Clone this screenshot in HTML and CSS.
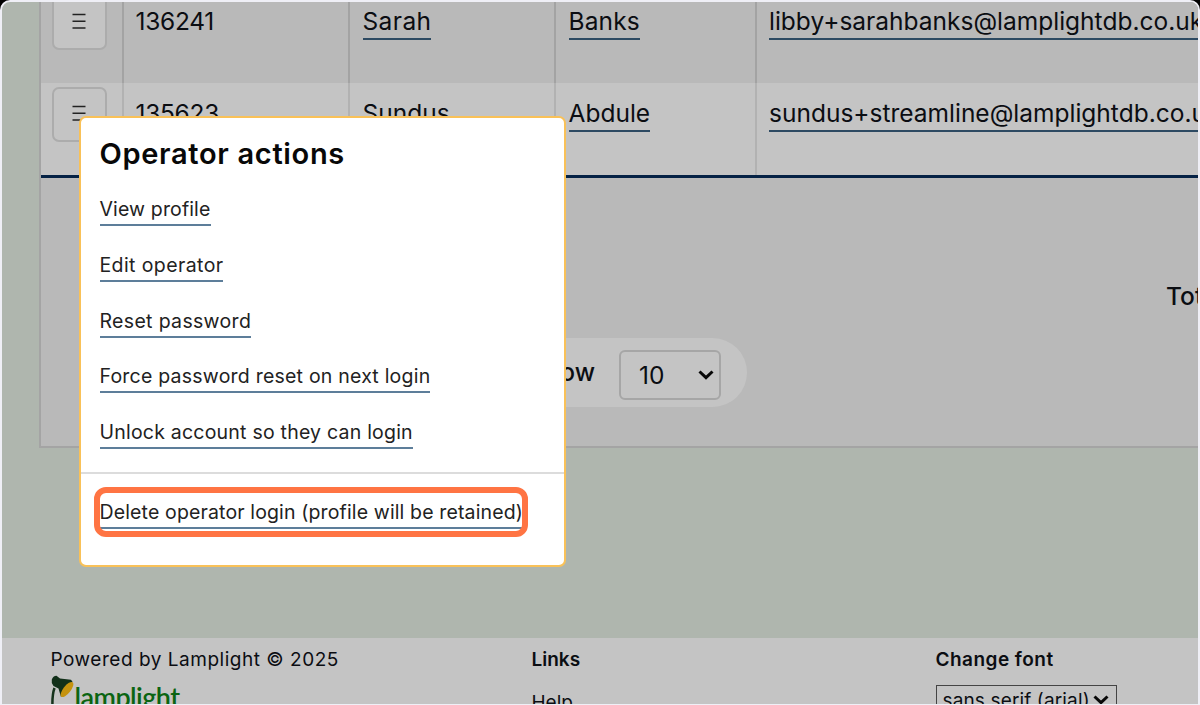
FILE: index.html
```html
<!DOCTYPE html>
<html lang="en">
<head>
<meta charset="utf-8">
<title>Operators</title>
<link rel="stylesheet" href="styles.css">
</head>
<body>
<div class="frame">
  <main class="main">
    <section class="panel">
      <div class="row row-shaded">
        <div class="cell cell-button"><button class="row-button" aria-label="Actions"><svg class="bars" viewBox="0 0 14 16"><path d="M.5 1.5h13M.5 8.2h13M.5 15h13"/></svg></button></div>
        <div class="cell"><span class="value">136241</span></div>
        <div class="cell"><a class="link sp-4">Sarah</a></div>
        <div class="cell"><a class="link sp-1">Banks</a></div>
        <div class="cell"><a class="link mail">libby+sarahbanks@lamplightdb.co.uk</a></div>
      </div>
      <div class="row row-last">
        <div class="cell cell-button"><button class="row-button" aria-label="Actions"><svg class="bars" viewBox="0 0 14 16"><path d="M.5 1.5h13M.5 8.2h13M.5 15h13"/></svg></button></div>
        <div class="cell"><span class="value">135623</span></div>
        <div class="cell"><a class="link">Sundus</a></div>
        <div class="cell"><a class="link">Abdule</a></div>
        <div class="cell"><a class="link mail">sundus+streamline@lamplightdb.co.uk</a></div>
      </div>
      <div class="summary"><span class="total">Total: 2</span></div>
      <div class="pager">
        <span class="show">Show</span>
        <span class="select"><span>10</span><svg class="chevron" viewBox="0 0 16 10"><path d="M1.5 1.5 8 7.6l6.5-6.1"/></svg></span>
      </div>
    </section>
  </main>
  <footer class="footer">
    <div class="brand">
      <div class="foot-text powered">Powered by Lamplight © 2025</div>
      <div class="logo">
        <svg class="lamp" viewBox="0 0 24 32"><path class="arm" d="M3.500 13Q1 20 1.500 32"/><path class="shade" d="M.8 4.500Q2 1 5.500 0.800L9 3.500l11 1.200 1.500 2L10 22 7.500 13.500 2.500 11Q0 8 .8 4.500z"/><ellipse class="bulb" cx="16" cy="14.500" rx="3.700" ry="9.200" transform="rotate(38 16 14.500)"/></svg>
        <span class="logo-text">lamplight</span>
      </div>
    </div>
    <div class="links">
      <div class="foot-text"><b>Links</b></div>
      <div class="help">Help</div>
    </div>
    <div class="fonts">
      <div class="foot-text"><b class="sp-5">Change font</b></div>
      <div class="font-select"><span class="sp-1">sans serif (arial)</span><svg class="chevron" viewBox="0 0 16 10"><path d="M1.5 1.5 8 7.6l6.5-6.1"/></svg></div>
    </div>
  </footer>
  <div class="menu">
    <h2 class="menu-title">Operator actions</h2>
    <ul class="menu-list">
      <li><a class="item sp-1">View profile</a></li>
      <li><a class="item sp-4">Edit operator</a></li>
      <li><a class="item sp-3">Reset password</a></li>
      <li><a class="item sp-2">Force password reset on next login</a></li>
      <li><a class="item sp-2">Unlock account so they can login</a></li>
    </ul>
    <div class="danger"><a class="item sp-1">Delete operator login (profile will be retained)</a><span class="highlight"></span></div>
  </div>
</div>
</body>
</html>
```
FILE: styles.css
```css
* { box-sizing: border-box; }
body { margin: 0; background: #000; color: #0b0d12; font-family: Inter, "Liberation Sans", sans-serif; }
.frame { position: relative; width: 1200px; height: 705px; border: 2px solid #efeff6; border-bottom-width: 1px; border-radius: 10px 10px 0 0; overflow: hidden; background: #afb6ae; display: flex; flex-direction: column; }
.main { height: 636px; flex: none; padding-left: 37px; }
.panel { width: 1300px; height: 457px; margin-top: -11px; border: 2px solid #a4a4a4; background: #b9b9b9; }
.row { display: grid; grid-template-columns: 83px 226px 206px 201px 1fr; height: 92px; }
.row-shaded { margin-top: -2px; background: #b9b9b9; }
.row-last { height: 95px; background: #c4c4c4; border-bottom: 3px solid #052245; }
.cell { padding: 13px 0 0 12px; border-right: 2px solid #a3a3a3; white-space: nowrap; }
.row-last .cell { border-color: #b2b2b2; }
.cell-button { padding: 4px 0 0 11px; }
.row-button { display: grid; place-items: center; width: 55px; height: 55px; padding: 0 1px 3px 0; border: 2px solid #acacac; border-radius: 7px; background: #c4c4c4; }
.bars { width: 14px; height: 16px; fill: none; stroke: #222; stroke-width: 1.5; }
.value, .link { display: inline-block; height: 36px; font-size: 24.5px; line-height: 34px; }
.value { letter-spacing: -.3px; margin-left: -.5px; }
.link { border-bottom: 2px solid #2d4a62; margin-left: .5px; }
.mail { margin-left: 0; }
.summary { height: 160px; padding: 102px 0 0 1125px; font-size: 24.5px; line-height: 32px; font-weight: 500; white-space: nowrap; }
.pager { display: flex; align-items: center; justify-content: flex-end; gap: 25px; width: 256px; height: 69px; margin-left: 450px; padding: 4px 26px 0 0; border-radius: 35px; background: #c4c4c4; font-size: 24.5px; }
.show { margin: -6px -1px 0 0; font-weight: 500; }
.select { display: flex; align-items: center; justify-content: space-between; width: 102px; height: 50px; padding: 0 5px 0 18px; border: 2px solid #a6a6a6; border-radius: 6px; }
.chevron { width: 16px; height: 10px; fill: none; stroke: #080808; stroke-width: 3; }
.sp-1 { letter-spacing: .14px; }
.sp-2 { letter-spacing: .22px; }
.sp-3 { letter-spacing: .33px; }
.sp-4 { letter-spacing: .4px; }
.sp-5 { letter-spacing: .47px; }
.footer { flex: 1; display: grid; grid-template-columns: 481px 404px 1fr; padding-left: 48.5px; background: #c4c4c4; font-size: 19px; white-space: nowrap; overflow: hidden; }
.foot-text { height: 36px; padding-top: 8px; line-height: 28px; }
.foot-text b { font-weight: 600; }
.powered { letter-spacing: .52px; }
.logo { display: flex; }
.lamp { width: 24px; height: 32px; flex: none; margin-top: 1px; }
.arm { fill: none; stroke: #16331c; stroke-width: 2.5; }
.shade { fill: #123019; }
.bulb { fill: #c5930f; }
.logo-text { font: 600 27px/45px Lato, sans-serif; letter-spacing: -.55px; color: #0b6412; }
.help { padding-top: 15px; line-height: 28px; }
.font-select { display: flex; align-items: center; justify-content: space-between; width: 181px; height: 30px; margin-top: 11px; padding: 0 7px 0 6px; border: 1px solid #444; }
.menu { position: absolute; left: 77px; top: 114px; width: 487px; height: 451px; border: 2px solid #f9c158; border-radius: 7px; background: #fff; }
.menu-title { margin: 0; padding: 17px 0 0 18.5px; font-size: 29px; line-height: 38px; font-weight: 600; letter-spacing: .68px; color: #080808; white-space: nowrap; }
.menu-list { margin: 0; padding: 21px 0 0 18.5px; list-style: none; height: 299px; }
.menu-list li { height: 55.8px; }
.item { display: inline-block; height: 32px; font-size: 19.5px; line-height: 30px; color: #222; border-bottom: 2px solid #5d7e9a; white-space: nowrap; }
.danger { position: relative; height: 92px; padding: 23px 0 0 18.5px; border-top: 2px solid #dcdcdc; }
.highlight { position: absolute; left: 13px; top: 13px; width: 434px; height: 50px; border: 6px solid #ff7443; border-radius: 12px; }
```
